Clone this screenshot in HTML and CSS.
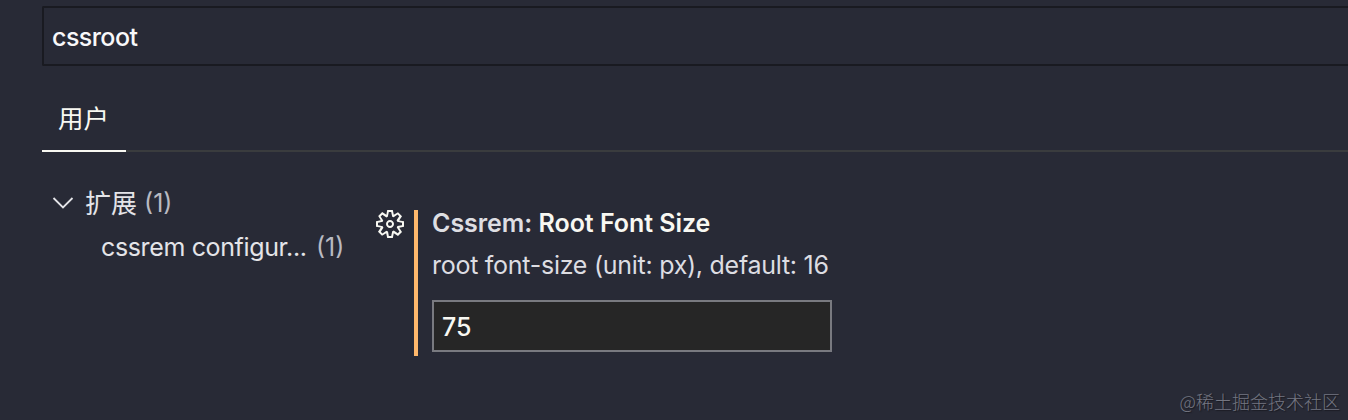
FILE: index.html
```html
<!DOCTYPE html>
<html lang="zh-CN">
<head>
<meta charset="utf-8">
<title>Settings</title>
<link rel="stylesheet" href="styles.css">
</head>
<body>
<main class="settings">
  <div class="search"><span class="search-text">cssroot</span></div>
  <nav class="tabs"><span class="tab"><span class="tab-label">用户</span></span></nav>
  <div class="content">
    <aside class="tree">
      <div class="tree-row">
        <svg class="chevron" viewBox="0 0 22 12"><path d="M1.5 1 11 10.5 20.5 1" fill="none" stroke="currentColor" stroke-width="1.8"/></svg>
        <span class="tree-cjk">扩展</span><span class="count">(1)</span>
      </div>
      <div class="tree-row child">
        <span class="child-label">cssrem configur...</span><span class="count child-count">(1)</span>
      </div>
    </aside>
    <svg class="gear" viewBox="0 0 16 16"><path fill="currentColor" fill-rule="evenodd" d="M9.1 4.4L8.6 2H7.4l-.5 2.4-.7.3-2-1.3-.9.8 1.3 2-.2.7-2.4.5v1.2l2.4.5.3.8-1.3 2 .8.8 2-1.3.8.3.4 2.3h1.2l.5-2.4.8-.3 2 1.3.8-.8-1.3-2 .3-.8 2.3-.4V7.4l-2.4-.5-.3-.8 1.3-2-.8-.8-2 1.3-.7-.2zM9.4 1l.5 2.4L12 2.1l2 2-1.4 2.1 2.4.4v2.8l-2.4.5L14 12l-2 2-2.1-1.4-.5 2.4H6.6l-.5-2.4L4 13.9l-2-2 1.4-2.1L1 9.4V6.6l2.4-.5L2.1 4l2-2 2.1 1.4.4-2.4h2.8zm.6 7c0 1.1-.9 2-2 2s-2-.9-2-2 .9-2 2-2 2 .9 2 2zM8 9c.6 0 1-.4 1-1s-.4-1-1-1-1 .4-1 1 .4 1 1 1z"/></svg>
    <section class="setting">
      <div class="title"><span class="category">Cssrem: </span><span class="name">Root Font Size</span></div>
      <div class="description">root font-size (unit: px), default: 16</div>
      <div class="number"><span class="number-text">75</span></div>
    </section>
  </div>
  <div class="watermark"><span class="at">@</span>稀土掘金技术社区</div>
</main>
</body>
</html>
```
FILE: styles.css
```css
* { box-sizing: border-box; }
body {
  margin: 0;
  background: #282a36;
  color: #f8f8f2;
  font-family: Inter, "Noto Sans CJK SC", sans-serif;
  font-size: 25px;
}
.settings {
  position: relative;
  height: 420px;
  padding: 6px 0 0 42px;
  overflow: hidden;
  white-space: nowrap;
}
.search {
  display: flex;
  align-items: center;
  height: 60px;
  padding: 2px 0 0 8px;
  border: 2px solid #191a21;
  border-right: 0;
  border-radius: 2px 0 0 2px;
}
.search-text { color: #f8f8fa; font-weight: 500; letter-spacing: -0.55px; }
.tabs {
  display: flex;
  height: 86px;
  border-bottom: 2px solid #3a3c3e;
}
.tab {
  width: 84px;
  height: 86px;
  padding: 35px 0 0 16px;
  border-bottom: 2px solid #f8f8f2;
}
.tab-label { display: block; font-size: 25.5px; line-height: 36px; }
.content { display: flex; }
.tree { width: 332px; padding-top: 29px; }
.tree-row {
  display: flex;
  align-items: center;
  height: 44px;
  color: #e4e4e8;
}
.chevron { width: 22px; height: 12px; margin: 0 11px 0 10px; }
.tree-cjk { padding-bottom: 4px; font-size: 26px; }
.count { margin-left: 7px; color: #b9bac2; letter-spacing: 0; }
.child { padding-left: 59px; }
.child-label { width: 207px; letter-spacing: -0.36px; }
.child-count { margin-left: 8px; }
.gear { width: 32px; height: 32px; margin-top: 56px; }
.setting {
  width: 418px;
  height: 146px;
  margin: 58px 0 0 8px;
  padding-left: 14px;
  border-left: 4px solid #ffb86c;
}
.title {
  height: 26px;
  line-height: 26px;
  font-weight: 600;
  letter-spacing: -0.04px;
}
.category { color: #dedee2; }
.description {
  height: 38px;
  margin-top: 10px;
  line-height: 38px;
  color: #dddde2;
  letter-spacing: -0.27px;
}
.number {
  display: flex;
  align-items: center;
  width: 400px;
  height: 52px;
  margin-top: 16px;
  padding: 2px 0 0 8px;
  border: 2px solid #797a80;
  background: #262626;
}
.number-text { font-weight: 500; }
.watermark {
  position: absolute;
  right: 8px;
  bottom: 6px;
  color: #747681;
  font-family: "Noto Sans CJK SC", sans-serif;
  font-size: 18px;
  font-weight: 300;
  line-height: 26px;
  text-shadow: 1px 1px 1px #191a21;
}
```
